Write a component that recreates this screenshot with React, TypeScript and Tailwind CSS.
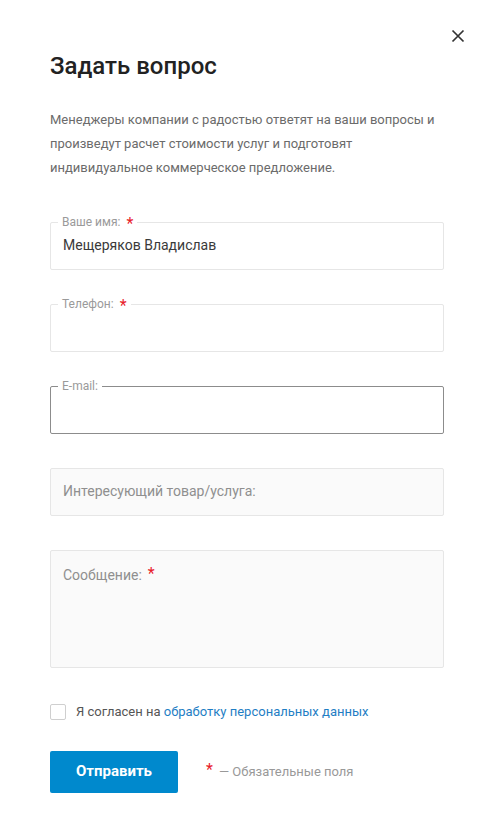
import React from "react";

const font = { fontFamily: "Roboto, 'Noto Sans', sans-serif" };

function Star() {
  return <span className="ml-[6px] text-[16px] leading-none text-[#e8202a]">*</span>;
}

function Field({
  label,
  value,
  required,
  focused,
}: {
  label: string;
  value?: string;
  required?: boolean;
  focused?: boolean;
}) {
  return (
    <div
      className={`relative h-[48px] rounded-[2px] border bg-white ${
        focused ? "border-[#8c8c8c]" : "border-[#e6e6e6]"
      }`}
    >
      <span className="absolute -top-[7px] left-[7px] flex items-start bg-white px-1 text-[12px] leading-none text-[#9a9a9a]">
        {label}
        {required && <Star />}
      </span>
      <div className="flex h-full items-center px-3 pb-[1px] text-[14px] text-[#3a3a3a]">{value}</div>
    </div>
  );
}

export default function App() {
  return (
    <div className="relative min-h-[830px] w-full bg-white px-[50px]" style={font}>
      <button className="absolute right-[29px] top-[29px] text-[#333]" aria-label="close">
        <svg width="14" height="14" viewBox="0 0 14 14" fill="none">
          <path d="M1.5 1.5l11 11M12.5 1.5l-11 11" stroke="currentColor" strokeWidth="1.7" />
        </svg>
      </button>

      <h1 className="pt-[52px] text-[24px] font-medium leading-[28px] text-[#222]">Задать вопрос</h1>

      <p className="mt-[28px] text-[13px] leading-[24px] text-[#6b6b6b]">
        Менеджеры компании с радостью ответят на ваши вопросы и произведут расчет стоимости услуг и
        подготовят индивидуальное коммерческое предложение.
      </p>

      <div className="mt-[42px] flex flex-col gap-[34px]">
        <Field label="Ваше имя:" value="Мещеряков Владислав" required />
        <Field label="Телефон:" required />
        <Field label="E-mail:" focused />
        <div className="flex h-[48px] items-center rounded-[2px] border border-[#e6e6e6] bg-[#fafafa] px-3 pb-[1px] text-[14px] text-[#8f8f8f]">
          Интересующий товар/услуга:
        </div>
        <div className="flex h-[118px] items-start rounded-[2px] border border-[#e6e6e6] bg-[#fafafa] px-3 pt-[15px] text-[14px] leading-[18px] text-[#8f8f8f]">
          Сообщение:
          <Star />
        </div>
      </div>

      <label className="mt-[34px] flex items-center gap-[10px] text-[13px] text-[#555]">
        <span className="h-[16px] w-[16px] rounded-[2px] border border-[#cfcfcf] bg-white" />
        <span>
          Я согласен на <span className="text-[#1f7ec4]">обработку персональных данных</span>
        </span>
      </label>

      <div className="mt-[29px] flex items-center gap-[28px]">
        <button className="h-[42px] w-[128px] rounded-[2px] bg-[#0089cd] text-[15px] font-bold text-white">
          Отправить
        </button>
        <span className="flex items-start text-[13px] text-[#999]">
          <span className="mr-[6px] text-[16px] leading-none text-[#e8202a]">*</span>— Обязательные поля
        </span>
      </div>
    </div>
  );
}
